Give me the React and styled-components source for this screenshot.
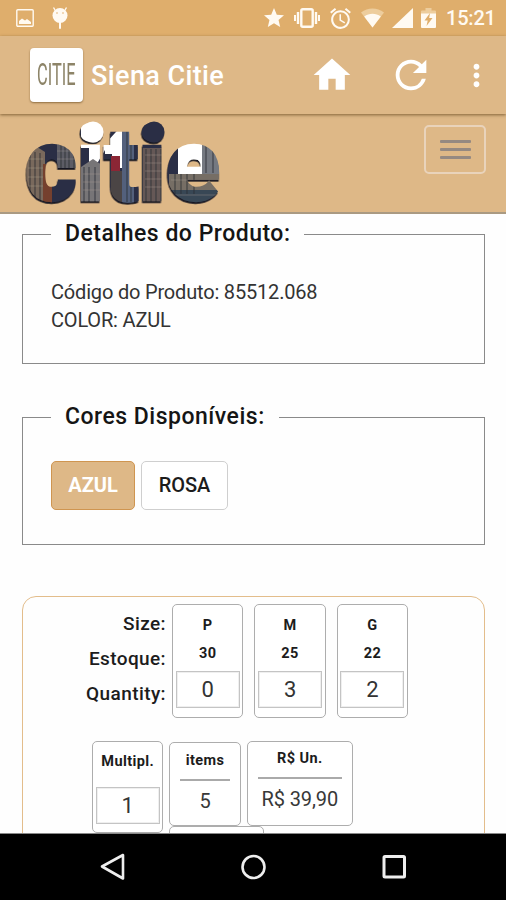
import React from 'react';
import styled, { createGlobalStyle } from 'styled-components';
import { MdHome, MdRefresh, MdMoreVert, MdStar, MdAlarm } from 'react-icons/md';

const GlobalStyle = createGlobalStyle`
    * {
        box-sizing: border-box;
    }
    body {
        margin: 0;
        background: #fff;
        color: #1c1c1c;
        font-family: Roboto, "Liberation Sans", sans-serif;
    }
`;

const Phone = styled.div`
    display: flex;
    flex-direction: column;
    width: 506px;
    height: 900px;
    overflow: hidden;
    background: #fefefe;
`;

const StatusBar = styled.div`
    display: flex;
    align-items: center;
    justify-content: space-between;
    flex: none;
    height: 36px;
    padding: 0 11px 0 16px;
    background: #dfae6c;
    color: #fffaf2;
`;

const StatusGroup = styled.div`
    display: flex;
    align-items: center;
    gap: ${props => props.$gap}px;

    svg {
        display: block;
        flex: none;
    }
`;

const Clock = styled.span`
    width: 49px;
    margin-left: 2px;
    font-size: 20px;
    font-weight: 500;
    line-height: 36px;
    white-space: nowrap;
    letter-spacing: -0.2px;
`;

const ActionBar = styled.header`
    display: flex;
    align-items: center;
    flex: none;
    height: 78px;
    padding: 0 12px 0 30px;
    background: #deb887;
    color: #fff;
    box-shadow: 0 1px 3px rgba(90, 60, 20, 0.7);
    z-index: 1;

    svg {
        display: block;
        flex: none;
    }
`;

const AppIcon = styled.div`
    display: flex;
    align-items: center;
    justify-content: center;
    width: 53px;
    height: 54px;
    border-radius: 4px;
    background: #fff;
    box-shadow: 0 1px 2px rgba(90, 60, 20, 0.6);
`;

const AppIconText = styled.span`
    color: #8d8468;
    font-size: 31px;
    font-weight: 400;
    line-height: 54px;
    white-space: nowrap;
    transform: scaleX(0.53);
`;

const AppTitle = styled.h1`
    flex: 1;
    margin: 2px 0 0 8px;
    font-size: 27px;
    font-weight: 500;
    white-space: nowrap;
    letter-spacing: 0.4px;
`;

const Actions = styled.div`
    display: flex;
    align-items: center;
    gap: 34px;

    svg:last-child {
        margin-left: -9px;
    }
`;

const NavBar = styled.nav`
    display: flex;
    align-items: flex-start;
    justify-content: space-between;
    flex: none;
    height: 100px;
    padding: 0 20px 0 20px;
    background: #deb887;
    border-bottom: 2px solid #aa9a82;
`;

const MenuButton = styled.button`
    display: flex;
    flex-direction: column;
    align-items: center;
    justify-content: center;
    gap: 5px;
    width: 62px;
    height: 49px;
    margin-top: 11px;
    padding: 0;
    border: 2px solid #e9d3bb;
    border-radius: 5px;
    background: transparent;
`;

const MenuLine = styled.span`
    width: 31px;
    height: 3px;
    border-radius: 1px;
    background: #958981;
`;

const Content = styled.main`
    flex: 1;
    min-height: 0;
    padding: 8px 21px 0 22px;
    overflow: hidden;
    border-bottom: 1px solid #888;
`;

const Section = styled.fieldset`
    height: ${props => props.$height}px;
    margin: 0 0 41px;
    padding: 31px 28px 0;
    border: 1px solid #8a8a8a;
`;

const Legend = styled.legend`
    height: 25px;
    padding: 0 14px;
    color: #151515;
    font-size: 23px;
    font-weight: 500;
    line-height: 23px;
    white-space: nowrap;
    letter-spacing: 0.5px;
`;

const Detail = styled.p`
    margin: 0;
    color: #333;
    font-size: 20px;
    line-height: 28px;
    letter-spacing: -0.18px;
`;

const Colors = styled.div`
    display: flex;
    gap: 6px;
`;

const ColorButton = styled.button`
    width: ${props => props.$width}px;
    height: 49px;
    padding: 0 0 2px;
    border: 1px solid ${props => (props.$active ? '#cf9550' : '#cfcfcf')};
    border-radius: 5px;
    background: ${props => (props.$active ? '#deb887' : '#fff')};
    color: ${props => (props.$active ? '#fff' : '#1c1c1c')};
    font-family: inherit;
    font-size: 20px;
    font-weight: ${props => (props.$active ? 700 : 500)};
`;

const Order = styled.section`
    height: 300px;
    margin-top: 51px;
    padding-top: 7px;
    border: 1px solid #e3bd8b;
    border-radius: 14px 14px 0 0;
`;

const SizeRow = styled.div`
    display: flex;
    gap: 11px;
`;

const Labels = styled.div`
    width: 143px;
    margin-right: -5px;
    padding-top: 2px;
    color: #1c1c1c;
    font-size: 19px;
    font-weight: 500;
    line-height: 35px;
    text-align: right;
    letter-spacing: 0.4px;
`;

const Card = styled.div`
    display: flex;
    flex-direction: column;
    align-items: center;
    flex: none;
    width: ${props => props.$width || 71.4}px;
    height: ${props => props.$height || 114}px;
    margin-top: ${props => props.$offset || 0}px;
    padding: ${props => props.$top}px 3px 0;
    border: 1px solid #adadad;
    border-radius: 5px;
    background: #fff;
`;

const CardText = styled.span`
    font-size: 14.500px;
    font-weight: 700;
    line-height: 28px;
    white-space: nowrap;
    letter-spacing: 0.4px;
`;

const Quantity = styled.input`
    width: 64px;
    height: 37px;
    margin-top: ${props => props.$gap}px;
    padding: 0;
    border: 1px solid #c4c4c4;
    outline: 1px solid #efefef;
    outline-offset: -2px;
    background: #fff;
    color: #333;
    font-family: inherit;
    font-size: 22px;
    text-align: center;
`;

const TotalRow = styled.div`
    display: flex;
    align-items: flex-start;
    gap: 6px;
    margin: 23px 0 0 69px;
`;

const Totals = styled.div`
    display: flex;
    align-items: flex-start;
    flex-wrap: wrap;
    gap: 0 6px;
    width: 200px;
`;

const Rule = styled.div`
    width: calc(100% - 14px);
    height: 2px;
    margin-top: 4px;
    background: #aaa;
`;

const Amount = styled.span`
    color: #383838;
    font-size: 20px;
    line-height: 40px;
    white-space: nowrap;
    letter-spacing: -0.1px;
`;

const SystemBar = styled.footer`
    display: flex;
    align-items: center;
    justify-content: space-between;
    flex: none;
    height: 66px;
    padding: 0 97px 0 98px;
    background: #000;
`;

const sizes = [
    { name: 'P', stock: 30, quantity: 0 },
    { name: 'M', stock: 25, quantity: 3 },
    { name: 'G', stock: 22, quantity: 2 },
];

function PictureIcon() {
    return (
        <svg width="18" height="18" viewBox="0 0 18 18">
            <rect x="0.8" y="0.8" width="16.4" height="16.4" rx="1" fill="none" stroke="currentColor" strokeWidth="1.4" />
            <path d="M3 15v-3l3-2.5 3 2 2-1.5 4 3v2z" fill="currentColor" />
        </svg>
    );
}

function BugIcon() {
    return (
        <svg width="18" height="24" viewBox="0 0 18 24">
            <path d="M4 4 2.500 1.500M14 4l1.500-2.500" stroke="currentColor" strokeWidth="1.4" />
            <ellipse cx="9" cy="9.500" rx="7.500" ry="7.500" fill="currentColor" />
            <path d="M9 16v6" stroke="currentColor" strokeWidth="2" strokeLinecap="round" />
            <circle cx="6" cy="7" r="0.8" fill="#dfae6c" />
            <circle cx="12" cy="7" r="0.8" fill="#dfae6c" />
        </svg>
    );
}

function VibrateIcon() {
    return (
        <svg width="26" height="20" viewBox="0 0 26 20">
            <rect x="7.300" y="1.300" width="11.400" height="17.400" rx="1.500" fill="none" stroke="currentColor" strokeWidth="2.400" />
            <path d="M4 4v12M22 4v12" stroke="currentColor" strokeWidth="2.400" />
            <path d="M1 7v6M25 7v6" stroke="currentColor" strokeWidth="2" />
        </svg>
    );
}

function WifiIcon() {
    return (
        <svg width="23" height="20" viewBox="0 0 23 20">
            <path d="M11.500 19.500 0 4.500C7-.8 16-.8 23 4.500z" fill="#edcd9d" />
            <path d="M11.500 19.500 3.200 8.500c5-3.600 11.600-3.600 16.600 0z" fill="currentColor" />
        </svg>
    );
}

function SignalIcon() {
    return (
        <svg width="21" height="20" viewBox="0 0 21 20">
            <path d="M0 20 21 0v20z" fill="currentColor" />
        </svg>
    );
}

function BatteryIcon() {
    return (
        <svg width="15" height="20" viewBox="0 0 15 20">
            <path d="M0 3.500a1 1 0 0 1 1-1h3.500V0h6v2.500H14a1 1 0 0 1 1 1V6H0z" fill="#edcd9d" />
            <path d="M0 5.500h15V19a1 1 0 0 1-1 1H1a1 1 0 0 1-1-1z" fill="currentColor" />
            <path d="M9 5 3.500 12.500h3.200L5.500 18l6-8H8.200z" fill="#dfae6c" />
        </svg>
    );
}

// wordmark filled with a city skyline
function Wordmark() {
    return (
        <svg width="208" height="98" viewBox="20 114 208 98" fontFamily="Roboto, sans-serif">
            <defs>
                <pattern id="city" patternUnits="userSpaceOnUse" x="0" y="114" width="240" height="98">
                    <rect width="240" height="98" fill="#2b2f45" />
                    <path d="M26 38l11-5 8 5v54H26z" fill="#79695b" />
                    <path d="M43 50h9v40h-9z" fill="#74412d" />
                    <path d="M57 30h22v30H57z" fill="#5b5c65" />
                    <path d="M81 0h24v36l-7 12-9 2V34h-8z" fill="#fff" />
                    <path d="M81 53l12-8 12 8v37H81z" fill="#777477" />
                    <path d="M105 30l20-22v46h-13V40h-7z" fill="#fff" />
                    <path d="M111 42h9v16h-9z" fill="#8b2536" />
                    <path d="M111 57h11v33h-11z" fill="#4c4545" />
                    <path d="M122 8h12v82h-12z" fill="#52617c" />
                    <path d="M143 34h23v56h-23z" fill="#655857" />
                    <path d="M178 28h24v32h-24z" fill="#fff" />
                    <path d="M202 28h18v32h-18z" fill="#747981" />
                    <path d="M169 60h51v17h-51z" fill="#766e65" />
                    <path d="M169 76h51v14h-51z" fill="#394655" />
                    <path
                        d="M30 38v47M35 38v50M40 39v50M61 30v36M65 30v36M69 30v36M74 30v36M84 53v36M89 53v36M95 53v36M101 53v36M127 8v80M131 8v80M146 35v53M151 35v53M156 35v53M161 35v53M175 60v20M181 60v20M187 60v20M194 60v20M206 30v29M213 30v29"
                        stroke="#292a32"
                        strokeWidth="1.200"
                        opacity=".7"
                    />
                    <path
                        d="M28 45h15M28 54h15M28 63h15M28 72h15M57 37h22M57 45h22M83 60h22M83 68h22M83 76h22M145 41h19M145 49h19M145 57h19M145 65h19M145 73h19M171 66h48M171 81h48"
                        stroke="#b5a99a"
                        strokeWidth=".8"
                        opacity=".4"
                    />
                </pattern>
                <filter id="edge" x="-10%" y="-10%" width="120%" height="125%">
                    <feDropShadow dx="-0.5" dy="1.8" stdDeviation="0.7" floodColor="#171922" />
                </filter>
            </defs>
            <g filter="url(#edge)" fill="url(#city)">
                <text
                    x="25"
                    y="200"
                    fontSize="102"
                    fontWeight="900"
                    stroke="url(#city)"
                    strokeWidth="2.500"
                    textLength="195"
                    lengthAdjust="spacingAndGlyphs"
                >
                    citie
                </text>
                <circle cx="93" cy="132" r="10.500" />
                <circle cx="154" cy="132" r="10.500" />
            </g>
        </svg>
    );
}

function BackIcon() {
    return (
        <svg width="30" height="30" viewBox="0 0 30 30">
            <path d="M4 14.500 25 3v23.500z" fill="none" stroke="#eee" strokeWidth="2.600" strokeLinejoin="round" />
        </svg>
    );
}

function CircleIcon() {
    return (
        <svg width="30" height="30" viewBox="0 0 30 30">
            <circle cx="14.500" cy="15" r="11" fill="none" stroke="#eee" strokeWidth="2.600" />
        </svg>
    );
}

function SquareIcon() {
    return (
        <svg width="30" height="30" viewBox="0 0 30 30">
            <rect x="5" y="4.500" width="20.500" height="20.500" rx="1" fill="none" stroke="#eee" strokeWidth="3" />
        </svg>
    );
}

export default function App() {
    return (
        <Phone>
            <GlobalStyle />
            <StatusBar>
                <StatusGroup $gap={17}>
                    <PictureIcon />
                    <BugIcon />
                </StatusGroup>
                <StatusGroup $gap={8}>
                    <MdStar size={24} />
                    <VibrateIcon />
                    <MdAlarm size={25} />
                    <WifiIcon />
                    <SignalIcon />
                    <BatteryIcon />
                    <Clock>15:21</Clock>
                </StatusGroup>
            </StatusBar>

            <ActionBar>
                <AppIcon>
                    <AppIconText>CITIE</AppIconText>
                </AppIcon>
                <AppTitle>Siena Citie</AppTitle>
                <Actions>
                    <MdHome size={44} />
                    <MdRefresh size={46} />
                    <MdMoreVert size={35} />
                </Actions>
            </ActionBar>

            <NavBar>
                <Wordmark />
                <MenuButton aria-label="Menu">
                    <MenuLine />
                    <MenuLine />
                    <MenuLine />
                </MenuButton>
            </NavBar>

            <Content>
                <Section $height={142}>
                    <Legend>Detalhes do Produto:</Legend>
                    <Detail>Código do Produto: 85512.068</Detail>
                    <Detail>COLOR: AZUL</Detail>
                </Section>

                <Section $height={140}>
                    <Legend>Cores Disponíveis:</Legend>
                    <Colors>
                        <ColorButton $active $width={84}>AZUL</ColorButton>
                        <ColorButton $width={87}>ROSA</ColorButton>
                    </Colors>
                </Section>

                <Order>
                    <SizeRow>
                        <Labels>
                            <div>Size:</div>
                            <div>Estoque:</div>
                            <div>Quantity:</div>
                        </Labels>
                        {sizes.map(size => (
                            <Card key={size.name} $top={7}>
                                <CardText>{size.name}</CardText>
                                <CardText>{size.stock}</CardText>
                                <Quantity $gap={3} defaultValue={size.quantity} />
                            </Card>
                        ))}
                    </SizeRow>
                    <TotalRow>
                        <Card $top={6} $height={92}>
                            <CardText>Multipl.</CardText>
                            <Quantity $gap={11} defaultValue={1} />
                        </Card>
                        <Totals>
                            <Card $top={4} $height={84} $offset={1}>
                                <CardText>items</CardText>
                                <Rule />
                                <Amount>5</Amount>
                            </Card>
                            <Card $top={3} $height={85} $width={106}>
                                <CardText>R$ Un.</CardText>
                                <Rule />
                                <Amount>R$ 39,90</Amount>
                            </Card>
                            <Card $top={3} $height={85} $width={95} />
                        </Totals>
                    </TotalRow>
                </Order>
            </Content>

            <SystemBar>
                <BackIcon />
                <CircleIcon />
                <SquareIcon />
            </SystemBar>
        </Phone>
    );
}
